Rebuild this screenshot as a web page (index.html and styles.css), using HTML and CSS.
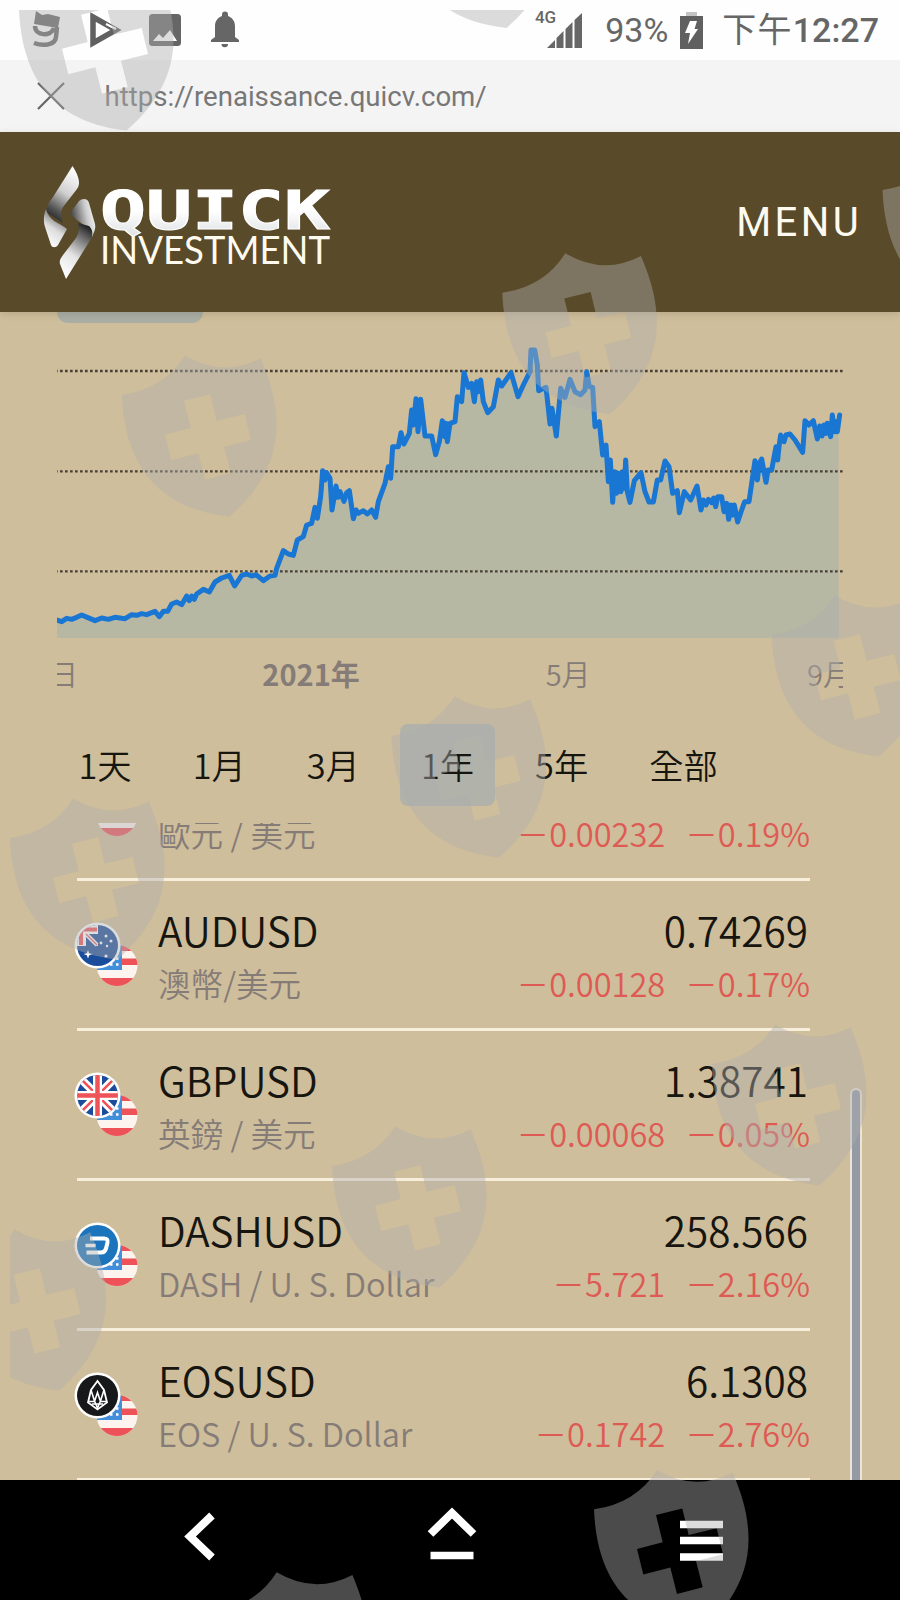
FILE: index.html
```html
<!DOCTYPE html>
<html lang="zh-Hant">
<head>
    <meta charset="UTF-8">
    <meta name="viewport" content="width=device-width, initial-scale=1.0">
    <title>Quick Investment</title>
    <link rel="stylesheet" href="styles.css">
</head>
<body>

<!-- Shared shapes -->
<svg class="defs" width="0" height="0">
    <defs>
        <clipPath id="flag-clip"><circle cx="43" cy="43.5" r="20.5"/></clipPath>
        <clipPath id="coin-clip"><circle cx="23.5" cy="23.5" r="20.5"/></clipPath>
        <g id="flag-us" clip-path="url(#flag-clip)">
            <rect x="22" y="23" width="43" height="42" fill="#fdf4ef"/>
            <path d="M22 23h43v6H22zM22 36.500h43v6.500H22zM22 56h43V65H22z" fill="#ec5257"/>
            <rect x="22" y="23" width="26" height="25" fill="#418fdb"/>
            <path d="M42 36.500h2.500M42 42.500h2.500M36 42.500h2.500" stroke="#fff" stroke-width="2.500"/>
        </g>
        <path id="shield" fill-rule="evenodd" d="M0 0Q42-6 63-39.400Q101-17 138.700-36.700C150-10 154.500 10 154.500 30C154.500 65 138 95 107.500 121.500C20 112 2 50 0 0ZM62 5.700L88.300-.7L94.700 25.700L122.700 19L129 45L102 51.700L108.700 78L83 84.700L76.300 58.300L49.300 65.300L43 39.700L68.700 33Z"/>
    </defs>
</svg>

<div class="phone">

    <!-- Status Bar -->
    <div class="status-bar">
        <svg class="status-icons" width="250" height="60" viewBox="0 0 250 60">
            <path d="M36 11l6 4 6-1 12 3-2 11-24-4z" fill="#666"/>
            <path d="M35 26c0 10 16 11 19 2M57 27l-1 10c-1 9-14 9-22 6" fill="none" stroke="#666" stroke-width="4.500"/>
            <path d="M93 17l23 13-23 13z" fill="none" stroke="#606060" stroke-width="5.500"/>
            <path d="M106 24l10 5" stroke="#fff" stroke-width="2"/>
            <rect x="149" y="14" width="32" height="32" rx="3.500" fill="#666"/>
            <path d="M153 41l6-7 4 4 7-8 7 11z" fill="#fff"/>
            <path d="M211 42v-2l4-3V26c0-6 4-9 7-10v-1.500a3 3 0 0 1 6 0V16c3 1 7 4 7 10v11l4 3v2zM221.500 44h6.500a3.200 3.200 0 0 1-6.500 0z" fill="#666"/>
        </svg>
        <div class="status-info">
            <span class="network">4G</span>
            <svg class="signal" width="36" height="36" viewBox="0 0 36 36" fill="#666">
                <path d="M0 36l8-8v8zM9.500 36V26l7-7v17zM18.500 36V17l7-7v26zM27.500 36V8L35 1v35z"/>
            </svg>
            <span class="percent">93%</span>
            <svg class="battery" width="24" height="37" viewBox="0 0 24 37">
                <path d="M6 0h11v5H6z" fill="#c4c4c4"/>
                <path d="M0 4h23v33H0z" fill="#606060"/>
                <path d="M10 9h7l-2.500 8H18L8 32l2-11H5z" fill="#fff"/>
            </svg>
            <span class="clock">下午<b>12:27</b></span>
        </div>
    </div>

    <!-- Address Bar -->
    <div class="address-bar">
        <svg width="28" height="28" viewBox="0 0 28 28">
            <path d="M1 1l26 26M27 1L1 27" stroke="#666" stroke-width="2.200"/>
        </svg>
        <span class="url">https://renaissance.quicv.com/</span>
    </div>

    <!-- Site Header -->
    <header class="site-header">
        <svg class="logo" width="292" height="120" viewBox="0 0 292 120">
            <defs>
                <linearGradient id="g1" x1=".7" y1="0" x2=".3" y2="1">
                    <stop offset="0" stop-color="#fff"/>
                    <stop offset=".45" stop-color="#d0d0d0"/>
                    <stop offset=".8" stop-color="#555"/>
                    <stop offset="1" stop-color="#222"/>
                </linearGradient>
                <linearGradient id="g2" x1=".3" y1="1" x2=".7" y2="0">
                    <stop offset="0" stop-color="#fff"/>
                    <stop offset=".45" stop-color="#ddd"/>
                    <stop offset="1" stop-color="#444"/>
                </linearGradient>
                <linearGradient id="g3" x1="1" y1=".1" x2="0" y2=".4">
                    <stop offset="0" stop-color="#fff"/>
                    <stop offset=".4" stop-color="#ccc"/>
                    <stop offset="1" stop-color="#3c3c3c"/>
                </linearGradient>
                <linearGradient id="g4" x1=".3" y1="1" x2=".7" y2="0">
                    <stop offset="0" stop-color="#fff"/>
                    <stop offset=".4" stop-color="#e4e4e4"/>
                    <stop offset=".8" stop-color="#666"/>
                    <stop offset="1" stop-color="#222"/>
                </linearGradient>
                <linearGradient id="g5" x1="0" y1="0" x2="0" y2="1">
                    <stop offset=".5" stop-color="#fff"/>
                    <stop offset="1" stop-color="#d8dade"/>
                </linearGradient>
            </defs>
            <path d="M29.500 4C34 11 39 21 34 27L20 45C17 50 18 55 20 61L3 50C4 42 7 39 10 35z" fill="url(#g1)"/>
            <path d="M3 47C6 59 15 60 24 67L15 83C13 86 9 86 8 83L2 65C0 58 1 52 3 47z" fill="url(#g2)"/>
            <path d="M27 51L36 39C39 36 45 36 46 41L52 62C53 67 51 70 49 75C46 62 34 61 27 51z" fill="url(#g3)"/>
            <path d="M46 64C50 68 50 72 48 77L23 117L17 102C16 98 18 96 20 93L33 76C36 71 36 67 35 61z" fill="url(#g4)"/>
            <text class="logo-quick" x="57" y="67" textLength="230" lengthAdjust="spacingAndGlyphs">QUICK</text>
            <text class="logo-invest" x="57" y="101.500" textLength="230" lengthAdjust="spacingAndGlyphs">INVESTMENT</text>
        </svg>
        <a class="menu">MENU</a>
    </header>

    <!-- Content -->
    <main class="content">
        <div class="tab-edge"></div>

        <svg class="chart" width="786" height="378" viewBox="171 6 2358 1134">
            <path class="area" d="M171 930L185 935 200 925 215 928 230 922 245 915 262 922 285 932 305 924 325 928 345 922 375 926 395 914 440 914 465 904 478 920 490 904 503 904 515 882 530 876 545 884 560 858 575 866 590 852 610 838 628 846 645 816 665 804 688 796 704 828 725 796 740 792 755 798 768 794 790 812 810 798 825 796 830 775 850 722 865 732 880 736 892 690 910 680 920 645 935 640 945 592 952 625 962 560 968 482 980 495 990 505 996 600 1008 528 1020 560 1032 574 1048 542 1060 626 1075 604 1090 610 1115 600 1127 622 1135 575 1155 520 1165 470 1172 505 1178 410 1195 410 1203 368 1212 402 1228 370 1235 300 1240 345 1248 266 1254 365 1262 268 1275 378 1295 378 1307 434 1318 395 1327 332 1340 395 1350 340 1365 335 1372 260 1385 275 1392 188 1405 232 1415 220 1423 275 1430 215 1442 210 1450 275 1463 308 1480 290 1495 210 1505 228 1533 188 1554 260 1570 225 1590 185 1593 120 1604 120 1616 242 1638 232 1650 342 1656 295 1669 378 1682 235 1695 262 1710 208 1725 245 1742 254 1755 240 1760 185 1768 230 1778 232 1785 350 1798 335 1808 435 1818 405 1825 515 1831 450 1838 577 1850 490 1855 545 1863 485 1868 535 1877 450 1882 545 1890 577 1903 512 1923 488 1935 545 1947 576 1960 576 1972 510 1982 510 1995 453 2007 470 2018 550 2032 542 2038 608 2053 545 2072 570 2091 528 2103 600 2115 570 2135 578 2145 590 2153 560 2165 560 2172 605 2180 580 2186 628 2198 585 2213 636 2225 600 2247 575 2255 520 2265 452 2272 510 2285 447 2298 517 2315 480 2328 410 2337 450 2342 375 2370 372 2408 427 2415 332 2440 332 2452 387 2465 345 2478 340 2492 380 2497 315 2512 365 2516 315V984H171z"/>
            <path class="grid-line" d="M165 183H2529M165 484H2529M165 784H2529"/>
            <path class="line" d="M171 930L185 935 200 925 215 928 230 922 245 915 262 922 285 932 305 924 325 928 345 922 375 926 395 914 410 916 425 911 440 914 465 904 478 920 490 904 503 904 515 882 530 876 545 884 560 858 568 872 575 858 583 868 590 852 610 838 628 846 645 816 665 804 688 796 704 828 725 796 740 792 755 798 768 794 790 812 810 798 825 796 830 775 850 722 865 732 880 736 892 690 910 680 920 645 935 640 945 592 952 625 962 560 968 482 975 510 980 488 990 505 996 600 1008 528 1014 562 1020 545 1032 574 1040 548 1048 542 1060 626 1068 600 1075 610 1090 602 1102 612 1115 600 1127 622 1135 575 1155 520 1165 470 1172 505 1178 410 1195 410 1203 368 1212 402 1228 370 1235 300 1240 345 1248 266 1254 365 1262 268 1275 378 1295 378 1307 434 1318 395 1327 332 1334 380 1338 340 1342 395 1350 340 1365 335 1372 260 1385 275 1392 188 1405 232 1415 220 1423 275 1430 215 1436 245 1442 210 1450 275 1463 308 1480 290 1495 210 1505 228 1533 188 1554 260 1570 225 1590 185 1593 120 1604 120 1612 165 1616 242 1638 232 1650 342 1656 295 1669 378 1682 235 1695 262 1710 208 1725 245 1742 254 1755 240 1760 185 1768 230 1778 232 1785 350 1798 335 1808 435 1818 405 1825 515 1831 450 1838 577 1844 485 1850 550 1855 490 1863 545 1868 485 1873 535 1877 450 1882 545 1890 577 1903 512 1923 488 1935 545 1947 576 1960 576 1972 510 1982 510 1995 453 2007 470 2018 550 2032 542 2038 608 2053 545 2072 570 2091 528 2103 600 2110 570 2118 585 2125 568 2135 578 2141 564 2147 590 2153 560 2165 560 2172 605 2180 580 2186 628 2192 585 2198 615 2203 585 2213 636 2225 600 2234 575 2247 575 2255 520 2265 452 2272 510 2278 460 2285 447 2298 517 2304 480 2315 480 2328 410 2333 450 2337 410 2342 375 2352 395 2358 375 2370 372 2385 390 2408 427 2415 332 2427 345 2440 332 2452 387 2459 348 2466 378 2472 345 2478 370 2482 340 2492 380 2497 315 2504 365 2508 335 2512 365 2519 315"/>
            <text class="axis" x="147" y="1127">日</text>
            <text class="axis axis-year" x="787" y="1127">2021年</text>
            <text class="axis" x="1637" y="1127">5月</text>
            <text class="axis" x="2421" y="1127">9月</text>
        </svg>

        <div class="ranges">
            <span class="range">1天</span>
            <span class="range">1月</span>
            <span class="range">3月</span>
            <span class="range active">1年</span>
            <span class="range">5年</span>
            <span class="range">全部</span>
        </div>

        <div class="quotes">
            <div class="quote partial">
                <svg class="pair" width="64" height="66" viewBox="0 0 64 66">
                    <use href="#flag-us"/>
                </svg>
                <div class="names"><span class="desc">歐元 / 美元</span></div>
                <div class="values"><span class="change"><span>－0.00232</span><span>－0.19%</span></span></div>
            </div>
            <div class="quote">
                <svg class="pair" width="64" height="66" viewBox="0 0 64 66">
                    <use href="#flag-us"/>
                    <circle cx="23.500" cy="23.500" r="23" fill="#fff"/>
                    <g clip-path="url(#coin-clip)">
                        <path d="M0 0h48v48H0z" fill="#1a4c9c"/>
                        <path d="M0 0h24v24H0z" fill="#fff"/>
                        <path d="M5 7.500h18M7 5v18" stroke="#ee5358" stroke-width="4"/>
                        <path d="M14 12h10v10z" fill="#1a4c9c"/>
                        <path d="M12 14v10h10z" fill="#1a4c9c"/>
                        <path d="M11 11l12 12" stroke="#fff" stroke-width="4"/>
                        <path d="M12 12l11 11" stroke="#ee5358" stroke-width="1.200"/>
                        <path d="M14 28l1.200 3.200L18.500 32l-3.300 1.200L14 36.500l-1.200-3.300L9.500 32l3.300-.8z" fill="#fff"/>
                        <g fill="#fff"><circle cx="32" cy="14" r="1.500"/><circle cx="27" cy="21" r="1.400"/><circle cx="37" cy="19" r="1.500"/><circle cx="33" cy="24" r="1.200"/><circle cx="32" cy="34" r="1.600"/></g>
                    </g>
                </svg>
                <div class="names"><span class="symbol">AUDUSD</span><span class="desc">澳幣/美元</span></div>
                <div class="values"><span class="price">0.74269</span><span class="change"><span>－0.00128</span><span>－0.17%</span></span></div>
            </div>
            <div class="quote">
                <svg class="pair" width="64" height="66" viewBox="0 0 64 66">
                    <use href="#flag-us"/>
                    <circle cx="23.500" cy="23.500" r="23" fill="#fff"/>
                    <g clip-path="url(#coin-clip)">
                        <path d="M0 0h48v48H0z" fill="#1a4c9c"/>
                        <path d="M3 3l41 41M44 3L3 44" stroke="#fff" stroke-width="8"/>
                        <path d="M3 3l41 41M44 3L3 44" stroke="#ee5358" stroke-width="2.500"/>
                        <path d="M23.500 0v48M0 23.500h48" stroke="#fff" stroke-width="9"/>
                        <path d="M23.500 0v48M0 23.500h48" stroke="#ee5358" stroke-width="4.500"/>
                    </g>
                </svg>
                <div class="names"><span class="symbol">GBPUSD</span><span class="desc">英鎊 / 美元</span></div>
                <div class="values"><span class="price">1.38741</span><span class="change"><span>－0.00068</span><span>－0.05%</span></span></div>
            </div>
            <div class="quote">
                <svg class="pair" width="64" height="66" viewBox="0 0 64 66">
                    <use href="#flag-us"/>
                    <circle cx="23.500" cy="23.500" r="23" fill="#fff"/>
                    <circle cx="23.500" cy="23.500" r="20.500" fill="#1c75bc"/>
                    <path d="M16 16.500h14q4.500 0 3.500 4l-1.500 6q-1 4-5 4H12.500" fill="none" stroke="#fff" stroke-width="4"/>
                    <path d="M11.500 23.500h10" stroke="#fff" stroke-width="3.500"/>
                </svg>
                <div class="names"><span class="symbol">DASHUSD</span><span class="desc">DASH / U. S. Dollar</span></div>
                <div class="values"><span class="price">258.566</span><span class="change"><span>－5.721</span><span>－2.16%</span></span></div>
            </div>
            <div class="quote">
                <svg class="pair" width="64" height="66" viewBox="0 0 64 66">
                    <use href="#flag-us"/>
                    <circle cx="23.500" cy="23.500" r="23" fill="#fff"/>
                    <circle cx="23.500" cy="23.500" r="20.500" fill="#17181a"/>
                    <path d="M23.500 9L17 18l-3 12.500 9.500 7 9.500-7L30 18z" fill="none" stroke="#fff" stroke-width="1.800"/>
                    <path d="M17 18l3.500 11L23.500 36l3-7L30 18M14.500 29.500h6l3-9 3 9h6M18 32h11" fill="none" stroke="#fff" stroke-width="1.600"/>
                </svg>
                <div class="names"><span class="symbol">EOSUSD</span><span class="desc">EOS / U. S. Dollar</span></div>
                <div class="values"><span class="price">6.1308</span><span class="change"><span>－0.1742</span><span>－2.76%</span></span></div>
            </div>
        </div>
        <div class="scrollbar"></div>
    </main>

    <!-- Navigation Keys -->
    <nav class="nav-keys">
        <svg width="900" height="120" viewBox="0 0 900 120" fill="none" stroke="#fff">
            <path d="M212 35.500L190 56.500l22 21" stroke-width="8"/>
            <path d="M430.500 54L452 33l21.500 21" stroke-width="8"/>
            <path d="M430.500 75.500h43" stroke-width="7.500"/>
            <path d="M680 44.500h43M680 60.500h43M680 77h43" stroke-width="7.500"/>
        </svg>
    </nav>

    <!-- Shield Overlay -->
    <svg class="shields" width="900" height="1600" viewBox="0 0 900 1600">
        <defs><clipPath id="page-clip"><path d="M10 10h890v1590H10z"/></clipPath></defs>
        <g clip-path="url(#page-clip)">
            <use href="#shield" x="19" y="9"/>
            <use href="#shield" x="399" y="-93.500"/>
            <use href="#shield" x="502.300" y="292.700"/>
            <use href="#shield" x="882.500" y="190"/>
            <use href="#shield" x="122" y="395"/>
            <use href="#shield" x="771.700" y="635"/>
            <use href="#shield" x="391.500" y="736"/>
            <use href="#shield" x="10" y="838"/>
            <use href="#shield" x="332" y="1166"/>
            <use href="#shield" x="712" y="1064"/>
            <use href="#shield" x="-48.500" y="1269"/>
            <use href="#shield" x="594" y="1509.300"/>
            <use href="#shield" x="213.700" y="1611.700"/>
        </g>
    </svg>
</div>

</body>
</html>
```
FILE: styles.css
```css
/* General Styles */
body {
    margin: 0;
    font-family: 'Noto Sans CJK TC', 'Noto Sans', sans-serif;
    font-weight: 350;
    background-color: #cfbe9b;
}

svg {
    display: block;
}

.defs {
    position: absolute;
}

.phone {
    position: relative;
    width: 900px;
    height: 1600px;
    overflow: hidden;
    display: flex;
    flex-direction: column;
}

/* Status Bar */
.status-bar {
    height: 60px;
    background-color: #fefefe;
    display: flex;
    justify-content: space-between;
    color: #666;
    font-family: Roboto, 'Noto Sans CJK TC', sans-serif;
    font-weight: 400;
}

.status-info {
    display: flex;
    align-items: center;
    padding-right: 21px;
    height: 60px;
}

.network {
    font-size: 17px;
    font-weight: 500;
    line-height: 17px;
    margin-top: -26px;
    margin-right: -9px;
}

.signal {
    margin-right: 22px;
}

.percent {
    font-size: 34px;
    margin-right: 12px;
}

.battery {
    margin-right: 18px;
}

.clock {
    font-size: 34px;
    line-height: 60px;
    letter-spacing: 1.2px;
    white-space: nowrap;
}

.clock b {
    font-weight: 500;
    letter-spacing: 0;
}

/* Address Bar */
.address-bar {
    height: 72px;
    box-sizing: border-box;
    padding-left: 37px;
    background-color: #f4f4f4;
    display: flex;
    align-items: center;
    gap: 39.500px;
}

.url {
    font-family: Roboto, sans-serif;
    font-weight: 400;
    font-size: 27.600px;
    color: #777;
}

/* Site Header */
.site-header {
    position: relative;
    z-index: 1;
    height: 180px;
    box-sizing: border-box;
    padding: 0 39px 0 43px;
    background-color: #594a29;
    display: flex;
    justify-content: space-between;
    align-items: center;
    box-shadow: 0 2px 8px rgba(0, 0, 0, 0.12);
}

.logo-quick {
    font-family: 'DejaVu Sans Mono', monospace;
    font-weight: bold;
    font-size: 54px;
    fill: url(#g5);
    stroke: #fff;
    stroke-width: 1;
}

.logo-invest {
    font-family: Lato, sans-serif;
    font-weight: 400;
    font-size: 38px;
    fill: #fffaf0;
}

.menu {
    font-family: Roboto, sans-serif;
    font-weight: 400;
    font-size: 40px;
    letter-spacing: 3.400px;
    margin-right: -1px;
    color: #fffaf0;
}

/* Content */
.content {
    position: relative;
    height: 1168px;
    display: flex;
    flex-direction: column;
}

.tab-edge {
    width: 146px;
    height: 11px;
    margin-left: 57px;
    margin-bottom: -11px;
    border-radius: 0 0 12px 12px;
    background-color: #aaaea4;
}

/* Chart */
.chart {
    margin-left: 57px;
    flex: none;
}

.area {
    fill: #b7b8a4;
}

.line {
    fill: none;
    stroke: #1976d2;
    stroke-width: 15;
    stroke-linejoin: round;
    stroke-linecap: round;
}

.grid-line {
    stroke: #4a4238;
    stroke-width: 7;
    stroke-dasharray: 8 7;
}

.axis {
    font-size: 87px;
    fill: #857c78;
}

.axis-year {
    font-weight: bold;
}

/* Range Buttons */
.ranges {
    height: 82px;
    margin-top: 34px;
    padding-left: 57.500px;
    display: flex;
    gap: 19px;
}

.range {
    padding: 0 21px;
    font-size: 34.300px;
    line-height: 80px;
    color: #17150f;
    border-radius: 8px;
}

.range.active {
    background-color: #b1b2a9;
}

/* Quote List */
.quotes {
    height: 657px;
    margin-top: 17px;
    padding: 0 90px 0 77px;
    overflow: hidden;
}

.quote {
    height: 150px;
    box-sizing: border-box;
    border-bottom: 3px solid #f8eedc;
    display: flex;
}

.quote.partial {
    margin-top: -92px;
}

.pair {
    flex: none;
    margin: 41px 0 0 -3px;
}

.names,
.values {
    display: flex;
    flex-direction: column;
    padding-top: 21px;
}

.partial .names,
.partial .values {
    padding-top: 77px;
}

.names {
    margin-left: 20px;
}

.values {
    margin-left: auto;
    align-items: flex-end;
}

.symbol,
.price {
    height: 56px;
    line-height: 56px;
    font-size: 40.500px;
    color: #17150f;
}

.price {
    padding-right: 2px;
}

.desc,
.change {
    height: 50px;
    line-height: 50px;
    font-size: 32.600px;
    color: #857c78;
    white-space: pre;
}

.change {
    display: flex;
    gap: 20px;
    color: #dd5b54;
}

/* Scrollbar */
.scrollbar {
    position: absolute;
    left: 850px;
    top: 776px;
    width: 8px;
    height: 400px;
    border: 2px solid #ece5d8;
    border-radius: 6px;
    background-color: #959ba5;
    clip-path: inset(0 0 12px 0);
}

/* Navigation Keys */
.nav-keys {
    position: relative;
    height: 120px;
    background-color: #000;
}

/* Shield Overlay */
.shields {
    position: absolute;
    left: 0;
    top: 0;
    z-index: 2;
    fill: rgba(175, 175, 175, 0.43);
    pointer-events: none;
}
```
